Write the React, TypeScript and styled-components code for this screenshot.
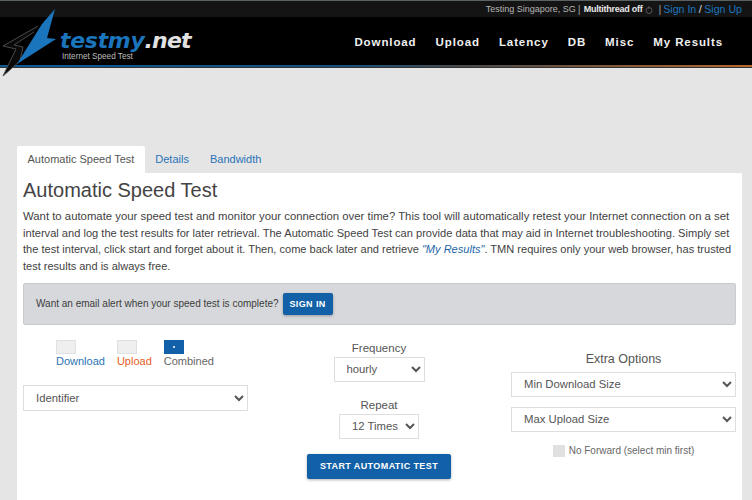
import React from "react";
import styled, { createGlobalStyle } from "styled-components";

const Global = createGlobalStyle`
  html, body { margin: 0; padding: 0; background: #e5e5e5; }
  body { font-family: "Liberation Sans", Arial, sans-serif; color: #444; width: 752px; height: 500px; overflow: hidden; }
  * { box-sizing: border-box; }
`;
const TopStrip = styled.div`
  height: 17px; background: #141414; border-top: 1px solid #5a6264;
  display: flex; justify-content: flex-end; align-items: center; padding-right: 10px;
  font-size: 9px; color: #b5b5b5;
`;
const Multi = styled.b`color: #e8e8e8; margin-left: 1px; letter-spacing: -0.25px;`;
const Sep = styled.span`margin: 0 2px; color: #999; font-size: 11px;`;
const TopLink = styled.a`color: #1c75bc; font-size: 10.6px;`;
const Slash = styled.span`color: #ddd; font-size: 11px; margin: 0 2.5px;`;
const Nav = styled.div`
  height: 48px; background: #000; display: flex; align-items: center; justify-content: space-between;
  padding: 2px 29px 0 0; overflow: visible;
`;
const Logo = styled.div`display: flex; align-items: flex-start; height: 48px; position: relative; width: 200px;`;
const Bolt = styled.svg`position: absolute; left: 0; top: -17px; width: 60px; height: 80px; z-index: 2;`;
const Wordmark = styled.div`
  position: absolute; left: 60px; top: 9px; font-family: "DejaVu Sans", sans-serif; font-style: italic; font-weight: 700;
  font-size: 22px; line-height: 28px; letter-spacing: -0.3px; color: #1b75bc; white-space: nowrap;
`;
const WordEnd = styled.span`color: #e2e2e2; letter-spacing: -0.8px;`;
const Tagline = styled.div`
  position: absolute; left: 62px; top: 33px; font-size: 8.2px; line-height: 11px; color: #bbb; white-space: nowrap;
`;
const Menu = styled.nav`display: flex; gap: 19px;`;
const MenuItem = styled.a`font-size: 11.5px; font-weight: 700; letter-spacing: 0.9px; color: #f0f0f0;`;
const Rule = styled.div`
  height: 3px; background: linear-gradient(90deg, #0f5a94 0%, #14507f 45%, #4a4a4a 62%, #b5682e 100%);
  border-bottom: 1px solid #333;
`;
const Page = styled.div`padding: 78px 10px 0 17px;`;
const Tabs = styled.div`display: flex; height: 27px; font-size: 11px;`;
const Tab = styled.div<{ $active?: boolean }>`
  padding: 0 10.5px; line-height: 26px;
  background: ${p => (p.$active ? "#fff" : "transparent")};
  color: ${p => (p.$active ? "#555" : "#2a73b7")};
  border-radius: 2px 2px 0 0;
`;
const Panel = styled.div`background: #fff; padding: 5px 6px 0 6px; height: 330px;`;
const Title = styled.h1`font-size: 20px; font-weight: 400; line-height: 24px; margin: 0 0 6px; color: #444;`;
const Intro = styled.div`line-height: 16.7px; margin: 0 0 8px; color: #3f3f3f;`;
const Line = styled.div<{ $size: number }>`font-size: ${p => p.$size}px; height: 16.7px; white-space: nowrap;`;
const IntroLink = styled.i`color: #1b66a8;`;
const Alert = styled.div`
  height: 42px; background: #d6d8db; border: 1px solid #c9cbce; border-radius: 2px;
  display: flex; align-items: center; padding-left: 12px; gap: 4px; font-size: 10px; color: #3d3d3d; margin-bottom: 15px;
`;
const Btn = styled.button`
  background: #1261a8; color: #fff; border: 0; border-radius: 2px; font-family: "Liberation Sans", Arial, sans-serif;
  font-weight: 700; text-transform: uppercase; font-size: 9px; letter-spacing: 0.4px;
  box-shadow: 0 1px 3px rgba(0,0,0,.3);
`;
const SignIn = styled(Btn)`width: 50px; height: 22px; padding: 0;`;
const Start = styled(Btn)`width: 144px; height: 25px; padding: 0; margin-top: 15px;`;
const Columns = styled.div`display: grid; grid-template-columns: 225px 262px 225px; justify-content: space-between; align-items: start;`;
const Left = styled.div`display: flex; flex-direction: column;`;
const Legend = styled.div`display: flex; padding-left: 33px; gap: 12px; margin-bottom: 16px;`;
const LegendItem = styled.div`display: flex; flex-direction: column; align-items: flex-start; font-size: 11px;`;
const Swatch = styled.span<{ $on?: boolean }>`
  display: flex; align-items: center; justify-content: center;
  width: 20px; height: 14px; margin-bottom: 0;
  background: ${p => (p.$on ? "#1261a8" : "#efefef")};
  border: 1px solid ${p => (p.$on ? "#1261a8" : "#e0e0e0")};
`;
const Dot = styled.span`width: 2px; height: 2px; background: #fff; border-radius: 50%;`;
const LegendLabel = styled.span<{ $color: string }>`color: ${p => p.$color}; line-height: 15px;`;
const Select = styled.select<{ $w?: number; $h?: number }>`
  width: ${p => (p.$w ? `${p.$w}px` : "100%")}; height: ${p => p.$h ?? 25}px; background: #fff; border: 1px solid #dedede;
  font-family: "Liberation Sans", Arial, sans-serif; font-size: 11.3px; color: #555; padding: 0 0 0 8px;
  border-radius: 0; outline: none;
`;
const Center = styled.div`display: flex; flex-direction: column; align-items: center; padding: 1px 1px 0 0;`;
const FieldLabel = styled.div`font-size: 11.5px; color: #555; line-height: 14px; margin-bottom: 2px;`;
const Spaced = styled(FieldLabel)`margin-top: 16px;`;
const Right = styled.div`display: flex; flex-direction: column; align-items: center; padding-top: 11px; gap: 10px;`;
const RightTitle = styled.div`font-size: 12.5px; color: #555; line-height: 16px; margin-bottom: -5px;`;
const Check = styled.div`display: flex; align-items: center; gap: 4px; font-size: 10px; color: #666; margin-top: 3px;`;
const Box = styled.span`width: 12px; height: 12px; background: #e0e0e0;`;

export default function App() {
  return (
    <>
      <Global />
      <TopStrip>
        Testing Singapore, SG<Sep>|</Sep><Multi>Multithread off</Multi>
        <svg width="10" height="10" viewBox="0 0 10 10" style={{ margin: "1px 2px 0 2px" }}>
          <circle cx="5" cy="5.5" r="3" fill="none" stroke="#555" strokeWidth="1" />
          <path d="M5 1v3" stroke="#555" strokeWidth="1" />
        </svg>
        <Sep>|</Sep><TopLink>Sign In</TopLink><Slash>/</Slash><TopLink>Sign Up</TopLink>
      </TopStrip>
      <Nav>
        <Logo>
          <Bolt viewBox="0 0 60 80">
            <path d="M38 25 L3 45 L16 48 L3 75 L20 60 L23 46 L14 44 L34 31" fill="#0a0a0a" stroke="#4a4a4a" strokeWidth="1" />
            <path d="M55 8 L42 23 L17 63 L56 38 L47 37 Z" fill="#1b75bc" />
          </Bolt>
          <Wordmark>testmy<WordEnd>.net</WordEnd></Wordmark>
          <Tagline>Internet Speed Test</Tagline>
        </Logo>
        <Menu>
          {["Download", "Upload", "Latency", "DB", "Misc", "My Results"].map(m => <MenuItem key={m}>{m}</MenuItem>)}
        </Menu>
      </Nav>
      <Rule />
      <Page>
        <Tabs>
          <Tab $active>Automatic Speed Test</Tab>
          <Tab>Details</Tab>
          <Tab>Bandwidth</Tab>
        </Tabs>
        <Panel>
          <Title>Automatic Speed Test</Title>
          <Intro>
            <Line $size={11.35}>Want to automate your speed test and monitor your connection over time? This tool will automatically retest your Internet connection on a set</Line>
            <Line $size={11.1}>interval and log the test results for later retrieval. The Automatic Speed Test can provide data that may aid in Internet troubleshooting. Simply set</Line>
            <Line $size={11.05}>the test interval, click start and forget about it. Then, come back later and retrieve <IntroLink>"My Results"</IntroLink>. TMN requires only your web browser, has trusted</Line>
            <Line $size={11}>test results and is always free.</Line>
          </Intro>
          <Alert>Want an email alert when your speed test is complete? <SignIn>Sign In</SignIn></Alert>
          <Columns>
            <Left>
              <Legend>
                <LegendItem><Swatch /><LegendLabel $color="#2a73b7">Download</LegendLabel></LegendItem>
                <LegendItem><Swatch /><LegendLabel $color="#e8601c">Upload</LegendLabel></LegendItem>
                <LegendItem><Swatch $on><Dot /></Swatch><LegendLabel $color="#666">Combined</LegendLabel></LegendItem>
              </Legend>
              <Select defaultValue="i" $h={26}><option value="i">Identifier</option></Select>
            </Left>
            <Center>
              <FieldLabel>Frequency</FieldLabel>
              <Select $w={91}><option>hourly</option></Select>
              <Spaced>Repeat</Spaced>
              <Select $w={80}><option>12 Times</option></Select>
              <Start>Start Automatic Test</Start>
            </Center>
            <Right>
              <RightTitle>Extra Options</RightTitle>
              <Select><option>Min Download Size</option></Select>
              <Select><option>Max Upload Size</option></Select>
              <Check><Box />No Forward (select min first)</Check>
            </Right>
          </Columns>
        </Panel>
      </Page>
    </>
  );
}
